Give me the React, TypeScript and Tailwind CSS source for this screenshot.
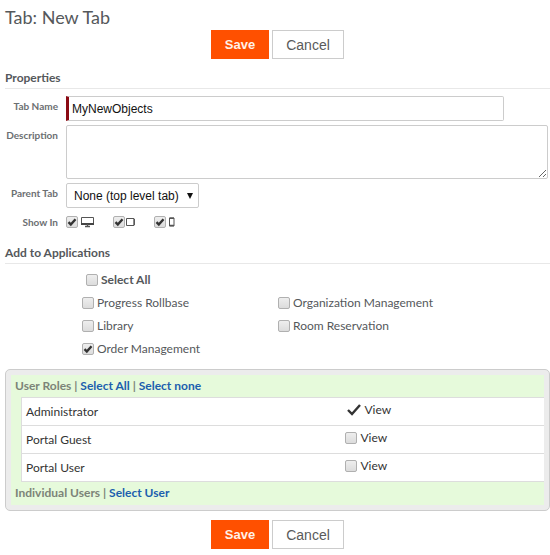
import type { ReactNode } from 'react';

function CheckBox({ id, checked = false }: { id: string; checked?: boolean }) {
  return (
    <span className="relative inline-flex size-3 shrink-0">
      <input
        id={id}
        type="checkbox"
        defaultChecked={checked}
        className="peer size-3 appearance-none rounded-[2px] border border-[#b0b0b0] bg-linear-to-b from-[#eeeeee] to-[#dcdcdc]"
      />
      <svg
        viewBox="0 0 12 12"
        className="pointer-events-none absolute inset-0 hidden size-3 peer-checked:block"
        fill="none"
        stroke="#333"
        strokeWidth="2.4"
      >
        <path d="M2.5 6.2 4.8 8.5 9.5 3.2" />
      </svg>
    </span>
  );
}

function Actions() {
  return (
    <div className="flex justify-center gap-[3px] font-['Liberation_Sans',Arial,sans-serif]">
      <button type="button" className="h-[29px] w-[58px] bg-[#ff5000] text-[13px] leading-4 font-bold text-[#fff1e8]">
        Save
      </button>
      <button type="button" className="h-[29px] w-[72px] border border-[#ccc] bg-white text-[14px] leading-4 text-[#5a5a5a]">
        Cancel
      </button>
    </div>
  );
}

function Heading({ children }: { children: ReactNode }) {
  return (
    <h2 className="border-b border-[#e8e8e8] pb-[2px] text-[12px] leading-4 font-bold text-[#55585b]">{children}</h2>
  );
}

function Label({ htmlFor, children }: { htmlFor: string; children: ReactNode }) {
  return (
    <label htmlFor={htmlFor} className="pt-1 pr-2 text-right text-[10px] leading-3 font-bold whitespace-nowrap text-[#6c6f72]">
      {children}
    </label>
  );
}

function Monitor() {
  return (
    <svg width="13" height="12" viewBox="0 0 13 12" fill="none" stroke="#555">
      <path d="M.5 1.5h12v6H.5z" />
      <path d="M0 8h13" stroke="#444" strokeWidth="2" />
      <path d="M6.5 8v3M4 10.5h5" strokeWidth="1.4" />
    </svg>
  );
}

function Tablet() {
  return (
    <svg width="9" height="8" viewBox="0 0 9 8" fill="none" stroke="#555">
      <path d="M.5 .5h7.5v7H.5z" />
      <path d="M8.3 1v6" strokeWidth="1.3" />
    </svg>
  );
}

function Phone() {
  return (
    <svg width="6" height="10" viewBox="0 0 6 10" fill="none" stroke="#555">
      <path d="M.5 1h4.5v8H.5z" />
      <path d="M.5 1.3H5M.5 8.5H5" strokeWidth="1.5" />
    </svg>
  );
}

const applications = [
  { id: 'rollbase', name: 'Progress Rollbase' },
  { id: 'organization', name: 'Organization Management' },
  { id: 'library', name: 'Library' },
  { id: 'rooms', name: 'Room Reservation' },
  { id: 'orders', name: 'Order Management', checked: true },
];

const roles = [
  { id: 'admin', name: 'Administrator', fixed: true },
  { id: 'guest', name: 'Portal Guest', fixed: false },
  { id: 'user', name: 'Portal User', fixed: false },
];

const field = "border border-[#ccc] bg-white font-['Liberation_Sans',Arial,sans-serif] text-[12px] text-[#111]";

export default function App() {
  return (
    <form className="bg-white pt-2 pb-1 pl-[5px] font-[Lato,sans-serif] text-[#55585b]">
      <h1 className="text-[18px] leading-[18px] text-[#55585b]">Tab: New Tab</h1>
      <div className="mt-1">
        <Actions />
      </div>

      <section className="mt-[11px]">
        <Heading>Properties</Heading>
        <div className="mt-[7px] grid grid-cols-[61px_1fr] gap-y-1 pr-[2px]">
          <Label htmlFor="tab-name">Tab Name</Label>
          <input
            id="tab-name"
            defaultValue="MyNewObjects"
            className={`${field} h-[25px] w-10/11 rounded-r-[2px] border-l-[3px] border-l-[#8b0a14] pl-[3px]`}
          />
          <Label htmlFor="description">Description</Label>
          <textarea id="description" className={`${field} block h-[54px] w-full rounded-[2px]`} />
          <Label htmlFor="parent-tab">Parent Tab</Label>
          <div className="relative w-[133px]">
            <select id="parent-tab" className={`${field} block h-[25px] w-full appearance-none rounded-[2px] pl-[7px]`}>
              <option>None (top level tab)</option>
            </select>
            <svg viewBox="0 0 6 6" className="pointer-events-none absolute top-[10px] right-[6px] size-[6px]">
              <path d="M0 0h6L3 6z" fill="#111" />
            </svg>
          </div>
          <Label htmlFor="show-desktop">Show In</Label>
          <div className="flex h-5 items-center gap-[19px]">
            <label className="flex items-center gap-[3px]" aria-label="Desktop">
              <CheckBox id="show-desktop" checked />
              <Monitor />
            </label>
            <label className="flex items-center gap-px" aria-label="Tablet">
              <CheckBox id="show-tablet" checked />
              <Tablet />
            </label>
            <label className="flex items-center gap-[3px]" aria-label="Phone">
              <CheckBox id="show-phone" checked />
              <Phone />
            </label>
          </div>
        </div>
      </section>

      <section className="mt-[13px]">
        <Heading>Add to Applications</Heading>
        <div className="mt-[7px] pl-[77px] text-[12px] leading-4">
          <div className="flex h-[17px] items-center gap-[3px] pl-1 font-bold text-[#55585b]">
            <CheckBox id="all-apps" />
            <label htmlFor="all-apps">Select All</label>
          </div>
          <div className="mt-[3px] grid grid-cols-[196px_1fr]">
            {applications.map((app) => (
              <div key={app.id} className="flex h-[23px] items-center gap-[3px]">
                <CheckBox id={app.id} checked={app.checked} />
                <label htmlFor={app.id}>{app.name}</label>
              </div>
            ))}
          </div>
        </div>
      </section>

      <section className="mt-[9px] rounded-[5px] border border-[#ccc] bg-[#ececec] p-[5px] text-[12px] leading-4">
        <div className="bg-[#e6fadb] pt-[3px] pb-1">
          <div className="pl-1 font-bold text-[#7c8478]">
            User Roles | <a href="#all" className="text-[#1c5fae]">Select All</a> |{' '}
            <a href="#none" className="text-[#1c5fae]">Select none</a>
          </div>
          <div className="mt-[3px] pl-[10px]">
            <table className="w-full table-fixed border border-r-0 border-[#ddd] bg-white text-[#333]">
              <tbody>
                {roles.map((role) => (
                  <tr key={role.id} className="h-7 border-b border-[#ddd]">
                    <th scope="row" className="w-[62%] p-0 pl-1 text-left font-normal">{role.name}</th>
                    <td className="p-0 pb-1">
                      {role.fixed ? (
                        <div className="flex items-center gap-[3px] pl-[2px]">
                          <svg width="14" height="12" viewBox="0 0 14 12" fill="none" stroke="#333" strokeWidth="2.4">
                            <path d="M1 6 5 10 13 1" />
                          </svg>
                          View
                        </div>
                      ) : (
                        <div className="flex items-center gap-[3px]">
                          <CheckBox id={role.id} />
                          <label htmlFor={role.id}>View</label>
                        </div>
                      )}
                    </td>
                  </tr>
                ))}
              </tbody>
            </table>
          </div>
          <div className="mt-[3px] pl-1 font-bold text-[#7c8478]">
            Individual Users | <a href="#user" className="text-[#1c5fae]">Select User</a>
          </div>
        </div>
      </section>

      <div className="mt-[9px]">
        <Actions />
      </div>
    </form>
  );
}
